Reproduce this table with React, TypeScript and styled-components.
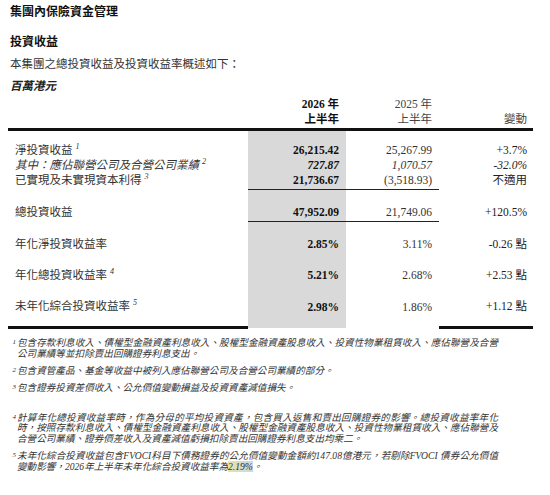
import React from 'react'
import styled, { createGlobalStyle } from 'styled-components'

const GlobalStyle = createGlobalStyle`
  html, body {
    margin: 0;
    padding: 0;
    background: #fff;
  }
  body {
    font-family: "Liberation Serif", "Noto Sans CJK TC", serif;
    color: #222;
  }
`

const Page = styled.div`
  width: 550px;
  height: 495px;
  padding: 4px 0 0 8px;
  box-sizing: border-box;
  overflow: hidden;
`

const Title = styled.div`
  padding-left: 2px;
  font-size: 12px;
  line-height: 16px;
  font-weight: bold;
  color: #111;
`

const SubTitle = styled(Title)`
  margin-top: 14px;
`

const Intro = styled.div`
  margin-top: 6px;
  padding-left: 2px;
  font-size: 11.5px;
  line-height: 16px;
  color: #333;
`

const Unit = styled(Intro)`
  font-style: italic;
  font-weight: bold;
  color: #222;
`

const Table = styled.table`
  margin-top: 3px;
  width: 498px;
  border-collapse: collapse;
  table-layout: fixed;
  font-size: 11.5px;
  line-height: 15px;
`

const HeadCell = styled.th<{ $bold?: boolean; $pr?: number; $w?: number }>`
  width: ${({ $w }) => ($w ? `${$w}px` : 'auto')};
  padding: 0 ${({ $pr }) => $pr ?? 7}px 0 0;
  text-align: right;
  font-weight: ${({ $bold }) => ($bold ? 'bold' : 'normal')};
  color: ${({ $bold }) => ($bold ? '#111' : '#444')};
  white-space: nowrap;
`

const HeadLastRow = styled.tr`
  th {
    padding-bottom: 1px;
    border-bottom: 3px solid #111;
  }
`

const Row = styled.tr<{ $pt: number; $pb: number; $rule?: boolean }>`
  td {
    padding-top: ${({ $pt }) => $pt}px;
    padding-bottom: ${({ $pb }) => $pb}px;
  }
  td:nth-child(2), td:nth-child(3) {
    border-bottom: ${({ $rule }) => ($rule ? '1.5px solid #222' : 'none')};
  }
`

const LastRow = styled(Row)`
  td {
    border-bottom: 3px solid #111;
  }
`

const Label = styled.td<{ $italic?: boolean }>`
  padding-left: 7px;
  text-align: left;
  font-style: ${({ $italic }) => ($italic ? 'italic' : 'normal')};
  color: #333;
  white-space: nowrap;
`

const Current = styled.td<{ $italic?: boolean }>`
  padding-right: 7px;
  text-align: right;
  background: #d9d9d9;
  font-weight: bold;
  font-style: ${({ $italic }) => ($italic ? 'italic' : 'normal')};
  color: #111;
`

const Prior = styled.td<{ $italic?: boolean }>`
  padding-right: 7px;
  text-align: right;
  font-style: ${({ $italic }) => ($italic ? 'italic' : 'normal')};
  color: #333;
`

const Change = styled.td<{ $italic?: boolean }>`
  padding-right: 6px;
  text-align: right;
  font-style: ${({ $italic }) => ($italic ? 'italic' : 'normal')};
  color: #222;
  white-space: nowrap;
`

const Sup = styled.sup`
  font-size: 8px;
  font-style: italic;
  line-height: 0;
  margin-left: 3px;
`

const Notes = styled.div`
  margin-top: 9px;
  padding-left: 1px;
  width: 497px;
  font-size: 9.6px;
  line-height: 10.5px;
  font-style: italic;
  color: #333;
`

const Note = styled.div<{ $gap: number }>`
  display: grid;
  grid-template-columns: 8px 481px;
  margin-top: ${({ $gap }) => $gap}px;
`

const NoteMark = styled.span`
  font-size: 7px;
  line-height: 8px;
  text-align: right;
  padding-right: 1px;
`

const Line = styled.span<{ $full?: boolean }>`
  display: block;
  white-space: nowrap;
  text-align: ${({ $full }) => ($full ? 'justify' : 'left')};
  text-align-last: ${({ $full }) => ($full ? 'justify' : 'left')};
`

const Mark = styled.span`
  background: linear-gradient(to right, #e4e3a4, #c6d8ef);
`

type Rate = { label: string; sup?: string; cur: string; prev: string; diff: string }

const rates: Rate[] = [
  { label: '年化淨投資收益率', cur: '2.85%', prev: '3.11%', diff: '-0.26 點' },
  { label: '年化總投資收益率', sup: '4', cur: '5.21%', prev: '2.68%', diff: '+2.53 點' },
  { label: '未年化綜合投資收益率', sup: '5', cur: '2.98%', prev: '1.86%', diff: '+1.12 點' },
]

export default function App() {
  return (
    <Page>
      <GlobalStyle />
      <Title>集團內保險資金管理</Title>
      <SubTitle>投資收益</SubTitle>
      <Intro>本集團之總投資收益及投資收益率概述如下：</Intro>
      <Unit>百萬港元</Unit>

      <Table>
        <thead>
          <tr>
            <HeadCell $w={233} />
            <HeadCell $w={91} $bold>2026 年</HeadCell>
            <HeadCell $w={86}>2025 年</HeadCell>
            <HeadCell $w={88} $pr={6} />
          </tr>
          <HeadLastRow>
            <HeadCell />
            <HeadCell $bold>上半年</HeadCell>
            <HeadCell>上半年</HeadCell>
            <HeadCell $pr={6}>變動</HeadCell>
          </HeadLastRow>
        </thead>
        <tbody>
          <Row $pt={12} $pb={0}>
            <Label>淨投資收益<Sup>1</Sup></Label>
            <Current>26,215.42</Current>
            <Prior>25,267.99</Prior>
            <Change>+3.7%</Change>
          </Row>
          <Row $pt={0} $pb={0}>
            <Label $italic>其中：應佔聯營公司及合營公司業績<Sup>2</Sup></Label>
            <Current $italic>727.87</Current>
            <Prior $italic>1,070.57</Prior>
            <Change $italic>-32.0%</Change>
          </Row>
          <Row $pt={0} $pb={1} $rule>
            <Label>已實現及未實現資本利得<Sup>3</Sup></Label>
            <Current>21,736.67</Current>
            <Prior>(3,518.93)</Prior>
            <Change>不適用</Change>
          </Row>
          <Row $pt={15} $pb={1} $rule>
            <Label>總投資收益</Label>
            <Current>47,952.09</Current>
            <Prior>21,749.06</Prior>
            <Change>+120.5%</Change>
          </Row>
          {rates.map((r, i) => {
            const Tr = i === rates.length - 1 ? LastRow : Row
            return (
              <Tr key={r.label} $pt={15} $pb={i === rates.length - 1 ? 12 : 1}>
                <Label>
                  {r.label}
                  {r.sup && <Sup>{r.sup}</Sup>}
                </Label>
                <Current>{r.cur}</Current>
                <Prior>{r.prev}</Prior>
                <Change>{r.diff}</Change>
              </Tr>
            )
          })}
        </tbody>
      </Table>

      <Notes>
        <Note $gap={0}>
          <NoteMark>1</NoteMark>
          <div>
            <Line $full>包含存款利息收入、債權型金融資產利息收入、股權型金融資產股息收入、投資性物業租賃收入、應佔聯營及合營</Line>
            <Line>公司業績等並扣除賣出回購證券利息支出。</Line>
          </div>
        </Note>
        <Note $gap={7}>
          <NoteMark>2</NoteMark>
          <div>
            <Line>包含資管產品、基金等收益中被列入應佔聯營公司及合營公司業績的部分。</Line>
          </div>
        </Note>
        <Note $gap={6.5}>
          <NoteMark>3</NoteMark>
          <div>
            <Line>包含證券投資差價收入、公允價值變動損益及投資資產減值損失。</Line>
          </div>
        </Note>
        <Note $gap={19}>
          <NoteMark>4</NoteMark>
          <div>
            <Line $full>計算年化總投資收益率時，作為分母的平均投資資產，包含買入返售和賣出回購證券的影響。總投資收益率年化</Line>
            <Line $full>時，按照存款利息收入、債權型金融資產利息收入、股權型金融資產股息收入、投資性物業租賃收入、應佔聯營及</Line>
            <Line>合營公司業績、證券價差收入及資產減值虧損扣除賣出回購證券利息支出均乘二。</Line>
          </div>
        </Note>
        <Note $gap={7}>
          <NoteMark>5</NoteMark>
          <div>
            <Line $full>未年化綜合投資收益包含FVOCI科目下債務證券的公允價值變動金額約147.08億港元，若剔除FVOCI 債券公允價值</Line>
            <Line>變動影響，2026年上半年未年化綜合投資收益率為<Mark>2.19%</Mark>。</Line>
          </div>
        </Note>
      </Notes>
    </Page>
  )
}
